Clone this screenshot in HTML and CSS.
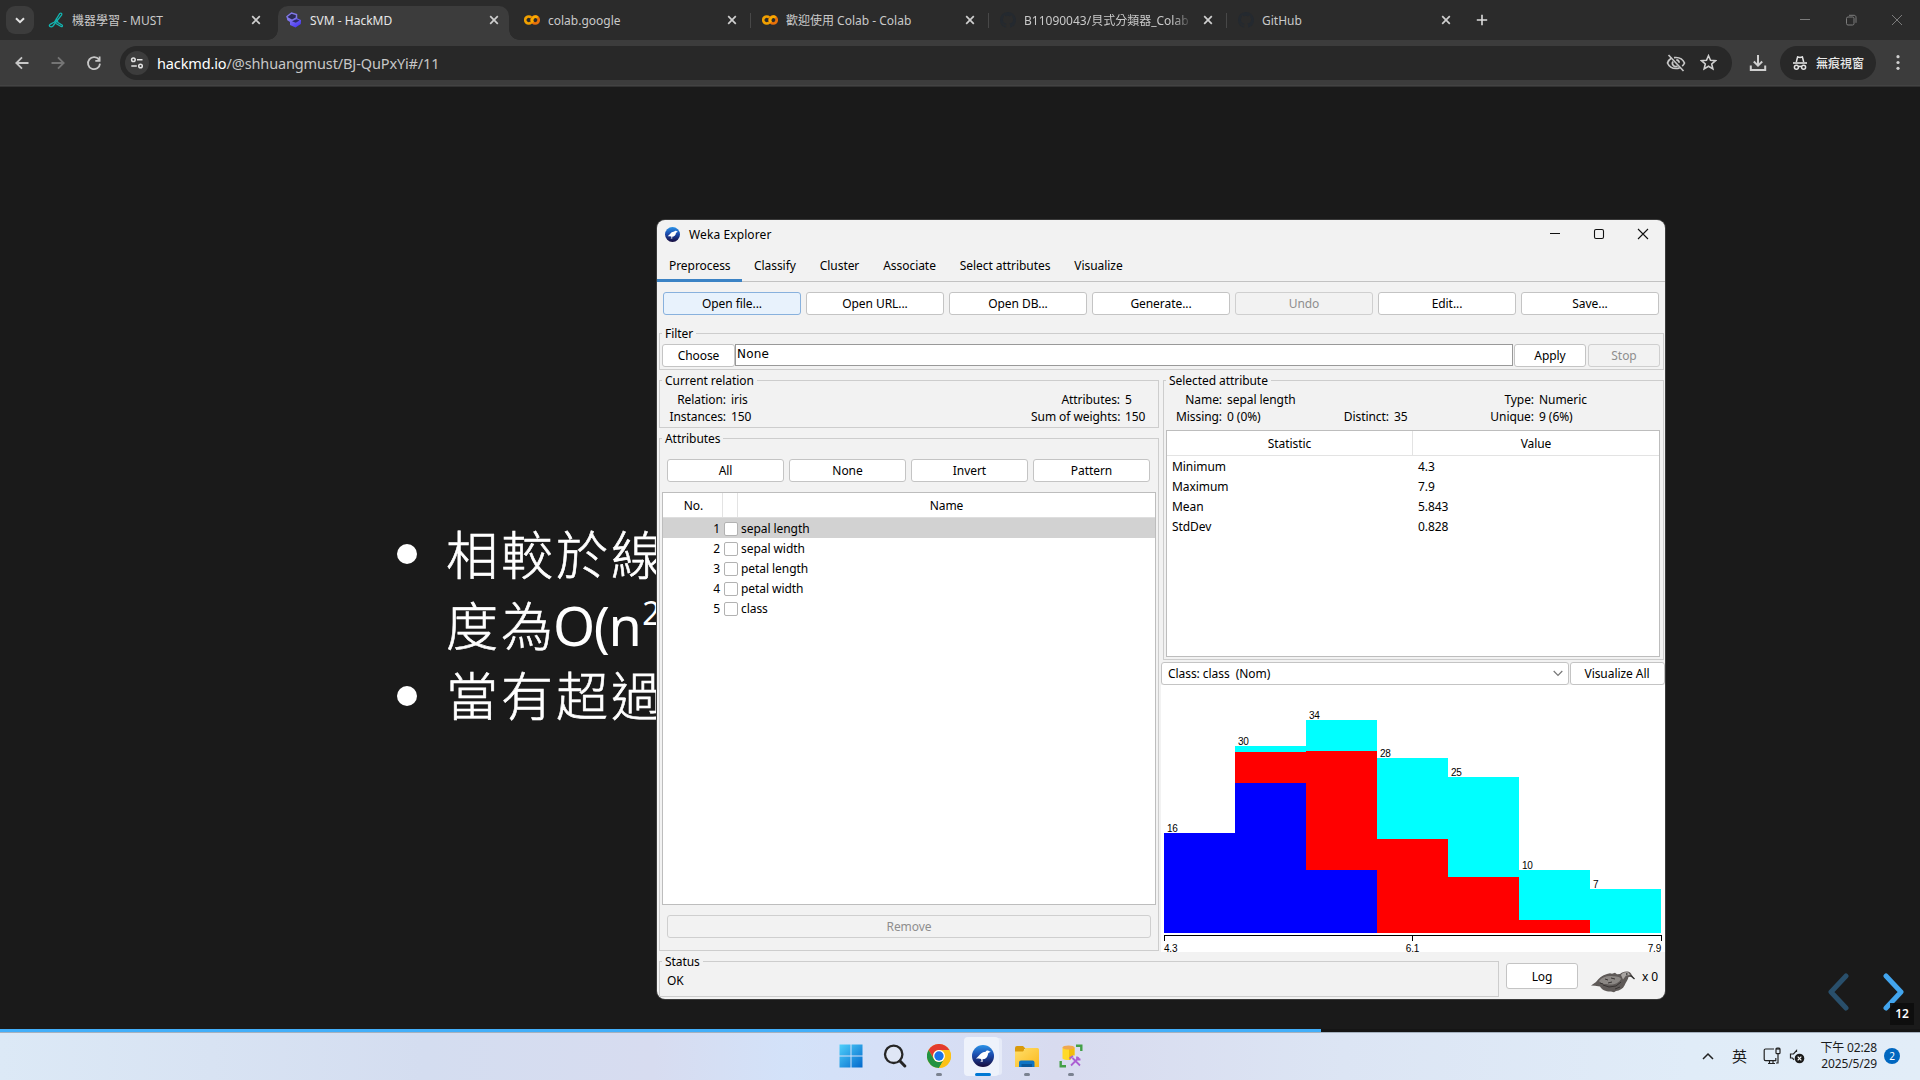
FILE: index.html
```html
<!DOCTYPE html>
<html lang="zh-Hant">
<head>
<meta charset="utf-8">
<title>SVM - HackMD</title>
<link rel="stylesheet" href="styles.css">
</head>
<body>
<svg width="0" height="0" class="defs">
  <defs>
    <symbol id="x" viewBox="0 0 10 10"><path d="M1.2 1.2l7.6 7.6M8.8 1.2L1.2 8.8" stroke="currentColor" stroke-width="1.7" fill="none"/></symbol>
    <symbol id="colab" viewBox="0 0 16 16"><g fill="none" stroke-width="2.7"><path d="M7.200 5.500A3.500 3.500 0 1 0 7.200 10.500" stroke="#f0a000"/><circle cx="11.200" cy="8" r="3.500" stroke="#e8710a"/><path d="M8.800 10.500A3.500 3.500 0 0 1 13.600 5.500" stroke="#f9ab00"/></g></symbol>
    <symbol id="github" viewBox="0 0 16 16"><path fill="#24292f" d="M8 0C3.580 0 0 3.580 0 8c0 3.540 2.290 6.530 5.470 7.590.4.070.550-.170.550-.380v-1.490c-2.010.370-2.530-.490-2.690-.940-.090-.230-.480-.940-.820-1.130-.280-.150-.680-.520-.010-.530.630-.010 1.080.580 1.230.820.720 1.210 1.870.870 2.330.660.070-.520.280-.870.510-1.070-1.780-.2-3.640-.890-3.640-3.950 0-.870.310-1.590.820-2.150-.080-.2-.360-1.020.080-2.120 0 0 .670-.210 2.200.820a7.400 7.400 0 0 1 4 0c1.530-1.040 2.200-.820 2.200-.820.440 1.100.160 1.920.080 2.120.510.560.820 1.270.820 2.150 0 3.070-1.870 3.750-3.650 3.950.290.250.540.730.540 1.480v2.200c0 .210.150.460.550.380A8 8 0 0 0 8 0z"/></symbol>
    <linearGradient id="wk" x1="0" y1="0" x2="0" y2="1"><stop offset="0" stop-color="#2a93e8"/><stop offset=".45" stop-color="#1c4cae"/><stop offset="1" stop-color="#170b3c"/></linearGradient>
    <symbol id="weka" viewBox="0 0 22 22"><circle cx="11" cy="11" r="11" fill="url(#wk)"/><path d="M18.800 6.800l-2-.9c-1.300-.7-2.600-.2-3.200.8-1.700.2-3.500.7-4.900 2.100-1.700 1.600-3 3.400-4.800 4.700 2.100.2 3.600 0 5.200.4l.4 2-1.500.8h2.800l-.3-2.500c2.900 0 5.100-1.900 5.500-5 .1-1.400 1.200-1.500 2.800-2.400z" fill="#fff"/></symbol>
    <linearGradient id="win" x1="0" y1="0" x2="1" y2="1"><stop offset="0" stop-color="#4fd0fb"/><stop offset="1" stop-color="#0369cc"/></linearGradient>
    <linearGradient id="fold" x1="0" y1="0" x2="1" y2="1"><stop offset="0" stop-color="#ffdf6b"/><stop offset="1" stop-color="#fbb91e"/></linearGradient>
    <linearGradient id="hm" x1="0" y1="0" x2="1" y2="1"><stop offset="0" stop-color="#8d85ee"/><stop offset="1" stop-color="#3f2bf5"/></linearGradient>
  </defs>
</svg>
<div class="screen">
  <header class="tabstrip">
    <div class="tabsearch"><svg width="10" height="7" viewBox="0 0 10 7"><path d="M1 1.200l4 4 4-4" fill="none" stroke="#e3e3e3" stroke-width="2"/></svg></div>
    <div class="tab first">
      <svg class="fav" viewBox="0 0 16 16"><g fill="none" stroke="#13b5b1" stroke-width="1.300"><path d="M11.800 1.500c1.500-1 2.500.2 1.700 1.600L5 14c-1.500 1.500-4.200.800-3.500-1 .5-1.200 3-1.800 5-3z"/><path d="M8.200 6.500L10 10.500l4 2.500c1 1 .2 2-1 1.500L8 11.500"/></g></svg>
      <span class="ttl">機器學習 - MUST</span><svg class="cls"><use href="#x"/></svg>
    </div>
    <div class="tab active">
      <svg class="fav" viewBox="0 0 16 16"><path d="M1 4.500L5.500 1l5 1.500V6L6 8.500 1.500 6z" fill="#2b2a55" stroke="#8078e8" stroke-width="1.500"/><path d="M1.500 6L6 8.800 10.500 6l4.500 2-.2 4L9.500 15.500 4 13V10L1 8z" fill="url(#hm)"/><path d="M6 9.300l3.800 1.500 3.700-2.200-3-1.300z" fill="#2b2a66"/></svg>
      <span class="ttl">SVM - HackMD</span><svg class="cls"><use href="#x"/></svg>
    </div>
    <div class="tab"><svg class="fav"><use href="#colab"/></svg><span class="ttl">colab.google</span><svg class="cls"><use href="#x"/></svg></div>
    <div class="tab sep"><svg class="fav"><use href="#colab"/></svg><span class="ttl">歡迎使用 Colab - Colab</span><svg class="cls"><use href="#x"/></svg></div>
    <div class="tab sep"><svg class="fav"><use href="#github"/></svg><span class="ttl fade">B11090043/貝式分類器_Colab</span><svg class="cls"><use href="#x"/></svg></div>
    <div class="tab sep"><svg class="fav"><use href="#github"/></svg><span class="ttl">GitHub</span><svg class="cls"><use href="#x"/></svg></div>
    <div class="newtab"><svg width="12" height="12" viewBox="0 0 12 12"><path d="M6 .8v10.400M.8 6h10.400" stroke="#dcdcdc" stroke-width="1.600"/></svg></div>
    <div class="winctl">
      <svg viewBox="0 0 12 12"><path d="M1 5.500h10"/></svg>
      <svg viewBox="0 0 12 12"><rect x="1.500" y="3" width="7.500" height="8" rx="1.500"/><path d="M4 1.300h5c1.200 0 2 .8 2 2v5.500"/></svg>
      <svg viewBox="0 0 12 12"><path d="M1 1l10 10M11 1L1 11"/></svg>
    </div>
  </header>
  <nav class="toolbar">
    <svg class="nav" viewBox="0 0 16 16"><path d="M14.500 8H2.500M8 2.300L2.300 8 8 13.700" stroke="#c7c7c7"/></svg>
    <svg class="nav" viewBox="0 0 16 16"><path d="M1.500 8h12M8 2.300L13.700 8 8 13.700" stroke="#757575"/></svg>
    <svg class="nav" viewBox="0 0 16 16"><path d="M13 4.800A6 6 0 1 0 14 8.600M13.600 1.500v4.300H9.300" stroke="#c7c7c7"/></svg>
    <div class="omnibox">
      <div class="site"><svg width="14" height="14" viewBox="0 0 14 14"><g fill="none" stroke="#e3e3e3" stroke-width="1.500"><circle cx="3.400" cy="3.700" r="1.800"/><path d="M7 3.700h5.500M1.300 10h5.500"/><circle cx="10.500" cy="10" r="1.800"/></g></svg></div>
      <span class="url"><b>hackmd.io</b>/@shhuangmust/BJ-QuPxYi#/11</span>
      <svg class="eye" viewBox="0 0 20 20"><g fill="none" stroke="#c7c7c7" stroke-width="1.700"><path d="M5.500 5C3.500 6.200 2.200 8 1.500 10c1.500 3.500 4.800 5.500 8.500 5.500 1.300 0 2.600-.3 3.700-.8M8 4.700c.6-.1 1.300-.2 2-.2 3.700 0 7 2 8.500 5.500-.5 1.300-1.300 2.300-2.300 3.200"/><path d="M7 8.500a3.200 3.200 0 0 0 4.500 4.400M10.300 6.800a3.200 3.200 0 0 1 2.900 3"/><path d="M2.500 2l15 16"/></g></svg>
      <svg class="star" viewBox="0 0 16 16"><path d="M8 1.600l1.900 4.300 4.700.4L11 9.400l1.100 4.600L8 11.500 3.900 14 5 9.400 1.400 6.300l4.700-.4z" fill="none" stroke="#d0d0d0" stroke-width="1.500"/></svg>
    </div>
    <svg class="dl" viewBox="0 0 18 18"><path d="M9 1v10.500M4.800 7.500L9 11.700l4.200-4.200M1.800 11.500V16h14.400v-4.500" fill="none" stroke="#d0d0d0" stroke-width="2"/></svg>
    <div class="incog">
      <svg width="16" height="16" viewBox="0 0 16 16"><path d="M4.300 7L5.600 2l2.400.6 2.400-.6L11.700 7" fill="none" stroke="#e3e3e3" stroke-width="1.500"/><path d="M1 8h14" stroke="#e3e3e3" stroke-width="1.600"/><g fill="none" stroke="#e3e3e3" stroke-width="1.500"><circle cx="4.400" cy="12.200" r="2"/><circle cx="11.600" cy="12.200" r="2"/><path d="M6.400 11.800q1.600-.9 3.200 0"/></g></svg>
      <span>無痕視窗</span>
    </div>
    <svg class="dots" viewBox="0 0 4 16"><g fill="#d0d0d0"><circle cx="2" cy="2.200" r="1.600"/><circle cx="2" cy="8" r="1.600"/><circle cx="2" cy="13.800" r="1.600"/></g></svg>
  </nav>

  <main class="slide">
    <ul class="points">
      <li>相較於線<br>度為<span class="lat">O(n<sup>2</sup>)</span></li>
      <li>當有超過</li>
    </ul>
    <div class="arrows">
      <svg class="prev" viewBox="0 0 22 38"><path d="M19 3L4 19l15 16"/></svg>
      <svg viewBox="0 0 22 38"><path d="M3 3l15 16L3 35"/></svg>
      <span class="pageno">12</span>
    </div>
    <div class="progress"><i></i></div>
  </main>

  <footer class="taskbar">
    <div class="apps">
      <div class="app"><svg width="24" height="24" viewBox="0 0 24 24"><path d="M.5.5h11v11H.5zM12.500.5h11v11h-11zM.5 12.500h11v11H.5zM12.500 12.500h11v11h-11z" fill="url(#win)"/></svg></div>
      <div class="app"><svg width="24" height="24" viewBox="0 0 24 24"><circle cx="10.700" cy="10.300" r="8.700" fill="#dfe6f5" stroke="#262626" stroke-width="2.300"/><path d="M17 17l4.800 5" stroke="#262626" stroke-width="3" stroke-linecap="round"/></svg></div>
      <div class="app run"><svg width="24" height="24" viewBox="0 0 24 24"><circle cx="12" cy="12" r="12" fill="#fcc934"/><path d="M1.600 6A12 12 0 0 1 22.400 6H12a6 6 0 0 0-5.200 9z" fill="#e33b2e"/><path d="M1.600 6a12 12 0 0 0 10.400 18l5.200-9a6 6 0 0 1-10.400 0z" fill="#229342"/><path d="M22.400 6A12 12 0 0 1 12 24l5.200-9A6 6 0 0 0 12 6z" fill="#fbc116"/><circle cx="12" cy="12" r="5.900" fill="#fff"/><circle cx="12" cy="12" r="4.700" fill="#1a73e8"/></svg></div>
      <div class="app on"><svg width="22" height="22"><use href="#weka"/></svg></div>
      <div class="app run"><svg width="24" height="24" viewBox="0 0 24 24"><path d="M0 4a2 2 0 0 1 2-2h6l3 3h-2v5H0z" fill="#d99a0b"/><path d="M0 7.500h8l2.500-3.500H22.500A1.500 1.500 0 0 1 24 5.500V23H0z" fill="url(#fold)"/><path d="M4 23v-4.500a2 2 0 0 1 2-2h11.500a2 2 0 0 1 2 2V23z" fill="#0f74c4"/><path d="M6.500 20h10.500v3H6.500z" fill="#0a579b"/></svg></div>
      <div class="app run"><svg width="24" height="24" viewBox="0 0 24 24"><path d="M3.500 3.500v11c2 2 10 2 12 0v-11z" fill="#ffd928"/><path d="M10 4v12c3 0 5-.6 5.500-1.500v-11z" fill="#f2bd0d"/><ellipse cx="9.500" cy="3.500" rx="6" ry="2" fill="#f0a850"/><path d="M11 16.500l3-5h8v10H11z" fill="#dbe0f1"/><path d="M17 1.700h5.300V7M1.700 17v5.300H7" fill="none" stroke="#43a047" stroke-width="2.400"/><path d="M12 21.500l8-8M13.500 14l7.500 7.500M10.500 14.500l3.500-2.500M18 12.500v3h3.500" fill="none" stroke="#ab5fd3" stroke-width="1.800"/></svg></div>
    </div>
    <div class="tray">
      <svg class="up" viewBox="0 0 12 8"><path d="M1 7l5-5 5 5" fill="none" stroke="#222" stroke-width="1.500"/></svg>
      <span class="ime">英</span>
      <svg class="net" viewBox="0 0 18 18"><g fill="none" stroke="#222" stroke-width="1.200"><path d="M11 2H2.500C1.700 2 1.200 2.500 1.200 3.300v9c0 .8.500 1.300 1.300 1.300h10.300v-2.500M5 16.500h7M6.500 14v2M10 14v2"/><rect x="13" y="1.200" width="4" height="5.500" rx="1"/><path d="M15 7v9h-2M14 1v2M16 1v2"/></g></svg>
      <svg class="snd" viewBox="0 0 16 16"><path d="M7.500 4V2.500L4.500 6H1.500v4h2l1.500 1.800" fill="none" stroke="#222" stroke-width="1.200"/><circle cx="10.500" cy="10.500" r="4.800" fill="#1b1b1b"/><path d="M8.700 8.700l3.600 3.600M12.300 8.700l-3.600 3.600" stroke="#fff" stroke-width="1.200"/></svg>
      <div class="clock"><span>下午 02:28</span><span>2025/5/29</span></div>
      <span class="bell">2</span>
    </div>
  </footer>

  <section class="weka">
    <div class="titlebar">
      <svg class="wicon"><use href="#weka"/></svg><span>Weka Explorer</span>
      <div class="wctl">
        <svg viewBox="0 0 12 12"><path d="M1 5.500h10"/></svg>
        <svg viewBox="0 0 12 12"><rect x="1.500" y="1.500" width="9" height="9" rx="1.500"/></svg>
        <svg viewBox="0 0 12 12"><path d="M1 1l10 10M11 1L1 11"/></svg>
      </div>
    </div>
    <div class="wtabs"><span class="sel">Preprocess</span><span>Classify</span><span>Cluster</span><span>Associate</span><span>Select attributes</span><span>Visualize</span></div>
    <div class="actions">
      <span class="btn focus">Open file...</span><span class="btn">Open URL...</span><span class="btn">Open DB...</span><span class="btn">Generate...</span><span class="btn off">Undo</span><span class="btn">Edit...</span><span class="btn">Save...</span>
    </div>
    <fieldset class="filter"><legend>Filter</legend>
      <div class="frow"><span class="btn choose">Choose</span><span class="field">None</span><span class="btn apply">Apply</span><span class="btn off stop">Stop</span></div>
    </fieldset>
    <div class="cols">
      <div class="left">
        <fieldset class="relation"><legend>Current relation</legend>
          <div class="info rel"><span>Relation:</span><em>iris</em><span>Attributes:</span><em>5</em><span>Instances:</span><em>150</em><span>Sum of weights:</span><em>150</em></div>
        </fieldset>
        <fieldset class="attrs"><legend>Attributes</legend>
          <div class="picks"><span class="btn">All</span><span class="btn">None</span><span class="btn">Invert</span><span class="btn">Pattern</span></div>
          <div class="table">
            <div class="thead"><span>No.</span><span></span><span>Name</span></div>
            <div class="tr cur"><span>1</span><i></i><span>sepal length</span></div>
            <div class="tr"><span>2</span><i></i><span>sepal width</span></div>
            <div class="tr"><span>3</span><i></i><span>petal length</span></div>
            <div class="tr"><span>4</span><i></i><span>petal width</span></div>
            <div class="tr"><span>5</span><i></i><span>class</span></div>
          </div>
          <span class="btn off remove">Remove</span>
        </fieldset>
      </div>
      <div class="right">
        <fieldset class="selected"><legend>Selected attribute</legend>
          <div class="info att"><span>Name:</span><em>sepal length</em><span></span><em></em><span>Type:</span><em>Numeric</em><span>Missing:</span><em>0 (0%)</em><span>Distinct:</span><em>35</em><span>Unique:</span><em>9 (6%)</em></div>
          <div class="stats">
            <div class="shead"><span>Statistic</span><span>Value</span></div>
            <div class="sr"><span>Minimum</span><span>4.3</span></div>
            <div class="sr"><span>Maximum</span><span>7.9</span></div>
            <div class="sr"><span>Mean</span><span>5.843</span></div>
            <div class="sr"><span>StdDev</span><span>0.828</span></div>
          </div>
        </fieldset>
        <div class="classrow">
          <div class="combo"><span>Class: class&nbsp; (Nom)</span><svg width="10" height="7" viewBox="0 0 10 7"><path d="M.7 1l4.300 4.500L9.300 1" fill="none" stroke="#777" stroke-width="1.200"/></svg></div>
          <span class="btn">Visualize All</span>
        </div>
        <div class="chart">
          <div class="bars">
            <div class="bar"><b>16</b><i class="blue" style="height:100px"></i></div>
            <div class="bar"><b>30</b><i class="cyan" style="height:6px"></i><i class="red" style="height:31px"></i><i class="blue" style="height:150px"></i></div>
            <div class="bar"><b>34</b><i class="cyan" style="height:31px"></i><i class="red" style="height:119px"></i><i class="blue" style="height:63px"></i></div>
            <div class="bar"><b>28</b><i class="cyan" style="height:81px"></i><i class="red" style="height:94px"></i></div>
            <div class="bar"><b>25</b><i class="cyan" style="height:100px"></i><i class="red" style="height:56px"></i></div>
            <div class="bar"><b>10</b><i class="cyan" style="height:50px"></i><i class="red" style="height:13px"></i></div>
            <div class="bar"><b>7</b><i class="cyan" style="height:44px"></i></div>
          </div>
          <div class="axis"><i></i><i></i></div>
          <div class="ticks"><span>4.3</span><span>6.1</span><span>7.9</span></div>
        </div>
      </div>
    </div>
    <div class="bottom">
      <fieldset class="status"><legend>Status</legend><div>OK</div></fieldset>
      <span class="btn log">Log</span>
      <svg class="bird" viewBox="0 0 44 22"><path d="M0 14.500l5-3.500C8 7 11 4.500 16 3l3-.8 2 .6 3-1 2 1.400 3-.2C31 1 34 0 37 .6c2 .5 3 1.700 3.500 3L44 8.300l-3.500-2.500-3 .2c-.5 3-2.500 5-4 8.500-1.500 3.200-5 5.200-8.500 5.600l-2 1.200-3-.8c-5 .2-9.500-1.800-11-5L4 14.800z" fill="#5f5a58"/><path d="M8 10c3-4 8-5.500 13-5 4 .5 8 .5 9 3-2 4-7 6-12 5.500-4-.5-8-.5-10-3.500z" fill="#8b8784"/><path d="M30 4c1-2 4-3.500 7.500-2.500L39 4l-4 .5-3 4z" fill="#aaa6a3"/><path d="M12 14l6 2 7-1 5-4M14 8l3 1M20 7l4 1M17 12l4-1M9 12l3 1M24 18l5-2" fill="none" stroke="#383433" stroke-width="1"/><path d="M35 3h1.500M39.500 4.500l4 3.500" stroke="#333" stroke-width="1.300"/></svg>
      <span class="count">x 0</span>
    </div>
  </section>
</div>
</body>
</html>
```
FILE: styles.css
```css
* { box-sizing: border-box; }
body { margin: 0; background: #1a1a1a; font-family: "Noto Sans", "Noto Sans CJK TC", sans-serif; font-size: 12px; color: #000; }
svg { display: block; flex: none; }
.defs { position: absolute; }
.screen { width: 1920px; height: 1080px; overflow: hidden; position: relative; display: flex; flex-direction: column; }

/* browser tabs */
.tabstrip { height: 40px; background: #2b2b2b; display: flex; align-items: center; color: #c9c9c9; flex: none; }
.tabsearch { width: 28px; height: 28px; border-radius: 9px; background: #3c3c3c; margin-left: 6px; display: flex; align-items: center; justify-content: center; }
.tab { width: 238px; height: 40px; padding: 0 15px 0 11px; display: flex; align-items: center; gap: 8px; position: relative; }
.tab.first { margin-left: 3px; padding-left: 11px; }
.tab.active { color: #e6e6e6; }
.tab.active::before { content: ""; position: absolute; z-index: 0; left: 3px; right: 4px; top: 6px; bottom: 0; background: #3c3c3c; border-radius: 10px 10px 0 0; }
.tab.active::after { content: ""; position: absolute; left: -7px; right: -6px; bottom: 0; height: 10px; background: radial-gradient(circle at 0 0, transparent 9.500px, #3c3c3c 10px) 0 0 / 10px 10px no-repeat, radial-gradient(circle at 100% 0, transparent 9.500px, #3c3c3c 10px) 100% 0 / 10px 10px no-repeat; }
.tab.active > * { position: relative; z-index: 1; }
.tab.sep::before { content: ""; position: absolute; left: -1px; top: 13px; width: 1px; height: 15px; background: #484848; }
.fav { width: 16px; height: 16px; }
.ttl { flex: 1; white-space: nowrap; overflow: hidden; letter-spacing: 0; }
.ttl.fade { -webkit-mask-image: linear-gradient(90deg, #000 88%, transparent); mask-image: linear-gradient(90deg, #000 88%, transparent); }
.cls { width: 10px; height: 10px; color: #cfcfcf; margin-left: 2px; margin-right: -1px; }
.newtab { margin-left: 11px; }
.winctl { margin-left: auto; display: flex; gap: 34px; padding-right: 17px; }
.winctl svg { width: 12px; height: 12px; fill: none; stroke: #7c7c7c; stroke-width: 1; }

.toolbar { height: 47px; flex: none; background: linear-gradient(#3c3c3c 45px, #4a4a4a 46px, #1a1a1a 47px); display: flex; align-items: center; padding: 0 20px 2px 14px; }
.nav { width: 16px; height: 16px; margin-right: 20px; fill: none; stroke-width: 1.800; }
.omnibox { width: 1612px; height: 34px; margin-left: -2px; background: #282828; border-radius: 17px; display: flex; align-items: center; padding: 0 15px 0 5px; }
.site { width: 24px; height: 24px; border-radius: 50%; background: #3c3c3c; display: flex; align-items: center; justify-content: center; }
.url { font-size: 14.500px; color: #c7c7c7; margin-left: 8px; letter-spacing: -0.13px; flex: 1; }
.url b { color: #fff; font-weight: 400; }
.eye { width: 20px; height: 20px; margin-right: 14px; }
.star { width: 17px; height: 17px; }
.dl { width: 18px; height: 18px; margin-left: 17px; }
.incog { width: 96px; height: 34px; margin-left: 13px; background: #282828; border-radius: 17px; display: flex; align-items: center; padding-left: 12px; gap: 8px; color: #e8e8e8; font-weight: 500; }
.dots { width: 4px; height: 17px; margin-left: 20px; }

/* slide */
.slide { flex: 1; position: relative; display: flex; flex-direction: column; justify-content: flex-end; }
.points { list-style: none; margin: 0 0 300px 446px; padding: 0; width: 600px; color: #fff; font: 300 52px/71px "Noto Sans CJK TC", sans-serif; letter-spacing: 3px; -webkit-text-stroke: 0.6px #fff; }
.points li { position: relative; }
.points li::before { content: ""; position: absolute; left: -49px; top: 27px; width: 20px; height: 20px; border-radius: 50%; background: #fff; }
.points li + li { line-height: 70px; }
.lat { font-family: "Noto Sans", sans-serif; font-weight: 400; font-size: 54px; letter-spacing: -1.5px; line-height: 1; margin-left: -3px; -webkit-text-stroke: 0; }
.lat sup { font-size: 32px; line-height: 0; vertical-align: 21px; margin-left: 2px; }
.arrows { position: absolute; right: 15px; bottom: 21px; display: flex; gap: 34px; }
.arrows svg { width: 22px; height: 38px; fill: none; stroke: #42a5ee; stroke-width: 5; stroke-linecap: round; stroke-linejoin: round; }
.arrows .prev { opacity: .38; }
.pageno { position: absolute; right: -9px; bottom: -14px; width: 24px; height: 22px; background: rgba(13,13,13,.9); color: #fff; font: 600 12px/22px "Noto Sans", sans-serif; text-align: center; }
.progress { height: 3px; background: #151515; flex: none; }
.progress i { display: block; width: 1321px; height: 3px; background: #42affa; }

/* taskbar */
.taskbar { height: 48px; flex: none; border-top: 1px solid #a5b1bf; background: linear-gradient(90deg, #dce9f6 0, #d4ddf0 22%, #d7dcf0 34%, #d3e2f9 41%, #d6dff6 48%, #d8dbef 55%, #dce5f4 70%, #e0ecf8 88%, #e2edf8 100%); display: flex; align-items: center; }
.apps { display: flex; margin-left: 828.500px; height: 47px; }
.app { width: 44px; height: 47px; padding-bottom: 1px; display: flex; align-items: center; justify-content: center; position: relative; }
.app::after { position: absolute; bottom: 4px; height: 3px; border-radius: 2px; }
.app.run::after { content: ""; width: 6px; background: #7b8290; }
.app.on::after { content: ""; width: 16px; background: #0078d4; }
.app.on::before { content: ""; position: absolute; left: 3px; top: 4px; width: 35px; height: 39px; border-radius: 4px; background: #eef2fb; box-shadow: 4px 0 0 -1px #e6ebf8; }
.app svg { position: relative; }
.tray { margin-left: auto; display: flex; align-items: center; padding: 0 20px 2px 0; color: #1b1b1b; }
.up { width: 12px; height: 8px; }
.ime { font-size: 15px; margin: 0 16px 0 18px; line-height: 20px; }
.net { width: 18px; height: 18px; }
.snd { width: 16px; height: 16px; margin-left: 8px; }
.clock { width: 62px; margin-left: 10px; display: flex; flex-direction: column; text-align: right; line-height: 16px; font-size: 12px; white-space: nowrap; align-items: flex-end; letter-spacing: -0.15px; }
.bell { width: 16px; height: 16px; margin-left: 7px; border-radius: 50%; background: #0067c0; color: #fff; font-size: 10px; line-height: 16px; text-align: center; }

/* Weka window, floating over the page */
.weka { position: absolute; left: 657px; top: 220px; width: 1008px; height: 779px; background: #f2f2f2; border-radius: 8px; overflow: hidden; box-shadow: 0 0 0 1px #3a3a3a; letter-spacing: -0.06px; line-height: 16px; display: flex; flex-direction: column; white-space: nowrap; }
.titlebar { height: 29px; display: flex; align-items: center; padding: 0 16px 0 8px; gap: 9px; flex: none; letter-spacing: 0.1px; }
.wicon { width: 15px; height: 15px; }
.wctl { margin-left: auto; display: flex; gap: 32px; padding-bottom: 1px; }
.wctl svg { width: 12px; height: 12px; fill: none; stroke: #111; stroke-width: 1.100; }
.wtabs { height: 33px; flex: none; display: flex; border-bottom: 1px solid #c2c2c2; }
.wtabs span { padding: 9px 12px 0; height: 33px; }
.wtabs .sel { border-bottom: 3px solid #3c83c5; width: 85px; }
.btn { background: #fff; border: 1px solid #c4c4c4; border-radius: 3px; height: 23px; display: flex; align-items: center; justify-content: center; flex: none; }
.btn.focus { background: #e8f2fc; border-color: #88b1dd; }
.btn.off { background: #f2f2f2; border-color: #cfcfcf; color: #8e8e8e; }
.actions { display: grid; grid-template-columns: repeat(7, 138px); gap: 5px; padding: 10px 6px 0; flex: none; }
fieldset { border: 1px solid #cdcdcd; margin: 0; padding: 0; min-width: 0; }
legend { margin-left: 2px; padding: 0 3px; height: 15px; line-height: 15px; }
.filter { margin: 11px 1px 0 2px; height: 44px; flex: none; }
.frow { display: flex; padding: 3px 0 0 2px; }
.choose { width: 73px; }
.field { width: 778px; height: 22px; background: #fff; border: 1px solid #999; padding-left: 1px; line-height: 18px; font-family: "DejaVu Sans", sans-serif; font-size: 12px; letter-spacing: 0.2px; }
.apply { width: 72px; margin-left: 1px; }
.stop { width: 72px; margin-left: 2px; }
.cols { display: flex; margin-top: 3px; height: 579px; flex: none; }
.left { width: 500px; margin-left: 2px; }
.right { width: 504px; margin-left: 2px; }
.relation { height: 55px; }
.info { display: grid; grid-auto-rows: 17px; align-items: center; padding-top: 3px; }
.info span { text-align: right; padding-right: 5px; }
.info em { font-style: normal; }
.info.rel { grid-template-columns: 71px 300px 94px 33px; }
.info.att { grid-template-columns: 63px 90px 77px 76px 69px 90px; }
.attrs { height: 520px; margin-top: 3px; }
.picks { display: grid; grid-template-columns: repeat(4, 117px); gap: 5px; padding: 13px 7px 0; }
.table { margin: 10px 2px 0; height: 413px; background: #fff; border: 1px solid #bdbdbd; }
.thead { display: grid; grid-template-columns: 60px 15px 1fr; height: 25px; border-bottom: 1px solid #dedede; line-height: 26px; text-align: center; }
.thead span { border-right: 1px solid #e3e3e3; height: 24px; }
.thead span:first-child { padding-left: 2px; }
.thead span:last-child { border: 0; }
.tr { display: grid; grid-template-columns: 61px 14px 1fr; height: 20px; align-items: center; line-height: 20px; padding-top: 1px; }
.tr.cur { background: #d2d2d2; }
.tr span:first-child { text-align: right; padding-right: 4px; }
.tr i { width: 14px; height: 14px; margin-top: -1px; background: #fff; border: 1px solid #b2b2b2; border-radius: 2px; }
.tr span:last-child { padding-left: 3px; }
.remove { width: 484px; margin: 10px 0 0 7px; }
.selected { width: 501px; height: 287px; margin-left: 2px; }
.selected legend { margin-left: 2px; }
.stats { margin: 5px 3px 0 2px; height: 227px; border: 1px solid #bdbdbd; background: #fff; }
.shead { display: grid; grid-template-columns: 246px 1fr; height: 25px; line-height: 26px; text-align: center; border-bottom: 1px solid #e3e3e3; margin-bottom: 1px; }
.shead span { height: 24px; }
.shead span:first-child { border-right: 1px solid #e3e3e3; }
.sr { display: grid; grid-template-columns: 246px 1fr; height: 20px; line-height: 20px; padding-left: 5px; }
.classrow { display: flex; margin-top: 2px; gap: 1px; }
.combo { width: 408px; height: 23px; border: 1px solid #c4c4c4; border-radius: 3px; background: #fff; display: flex; align-items: center; justify-content: space-between; padding: 0 5px 0 6px; }
.classrow .btn { width: 95px; padding-right: 1px; }
.chart { height: 267px; background: #fff; font: 10px/9px "Liberation Sans", sans-serif; letter-spacing: 0; padding-left: 3px; }
.bars { display: grid; grid-template-columns: repeat(7, 71px); height: 248px; align-items: end; }
.bar { display: flex; flex-direction: column; }
.bar b { font-weight: 400; padding-left: 3px; height: 9px; letter-spacing: -0.4px; }
.bar i { display: block; }
.blue { background: #00f; }
.red { background: #f00; }
.cyan { background: #0ff; }
.axis { width: 498px; height: 6px; margin-top: 2px; border: 1px solid #000; border-bottom: 0; display: grid; grid-template-columns: 1fr 1fr; }
.axis i:first-child { border-right: 1px solid #000; }
.ticks { display: flex; justify-content: space-between; width: 497px; margin-top: 3px; letter-spacing: -0.2px; }
.bottom { display: flex; height: 45px; flex: none; margin-top: 2px; }
.status { width: 840px; height: 43px; margin-left: 2px; }
.status div { padding: 4px 0 0 7px; }
.log { width: 72px; height: 26px; margin: 9px 0 0 7px; padding-top: 1px; }
.bird { width: 44px; height: 22px; margin: 17px 0 0 13px; }
.count { margin: 15px 0 0 7px; }
```
